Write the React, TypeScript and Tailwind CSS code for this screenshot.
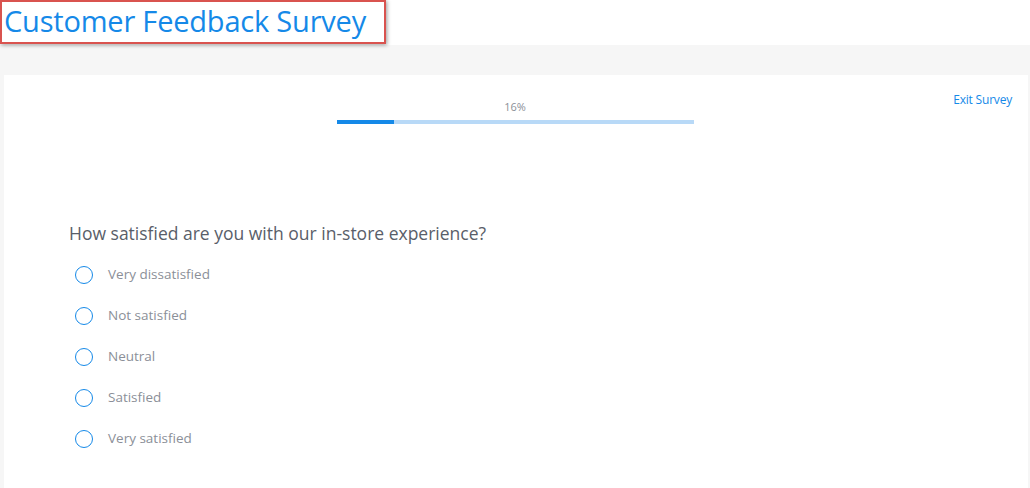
import React from "react";

const OPTIONS = ["Very dissatisfied", "Not satisfied", "Neutral", "Satisfied", "Very satisfied"];

export default function App() {
  const progress = 16;

  return (
    <div className="h-[488px] w-[1030px] overflow-hidden bg-white font-['Open_Sans',sans-serif]">
      {/* Title, highlighted */}
      <header className="h-[45px] bg-white">
        <div className="inline-block h-[44px] w-[386px] border-2 border-[#d9534f] pl-[2px] shadow-[1px_1px_4px_rgba(0,0,0,0.4)]">
          <h1 className="text-[29px] leading-[38px] tracking-[-0.2px] text-[#1589e8]">Customer Feedback Survey</h1>
        </div>
      </header>

      <div className="h-[443px] bg-[#f6f6f6] pt-[30px] pl-[4px] pr-[2px]">
        <div className="h-full bg-white">
          {/* Progress row */}
          <div className="relative flex justify-center pt-[24px]">
            <div className="-ml-[2px] flex w-[357px] flex-col items-center">
              <span className="text-[11px] leading-[16px] text-[#8b8f98]">{progress}%</span>
              <div className="mt-[5px] h-[4px] w-full bg-[#b8d9f7]">
                <div className="h-full bg-[#1589e8]" style={{ width: `${progress}%` }} />
              </div>
            </div>
            <a className="absolute right-[16px] top-[16px] text-[12px] tracking-[-0.2px] text-[#1589e8]">Exit Survey</a>
          </div>

          {/* Question */}
          <div className="pl-[65px] pt-[97px]">
            <p className="text-[17.5px] leading-[24px] text-[#595e69]">How satisfied are you with our in-store experience?</p>
            <div className="mt-[9px] flex flex-col">
              {OPTIONS.map((o) => (
                <label key={o} className="flex h-[41px] items-center">
                  <span className="ml-[6px] h-[18px] w-[18px] rounded-full border-[1.5px] border-[#1589e8]" />
                  <span className="ml-[15px] text-[13.5px] text-[#8b8f98]">{o}</span>
                </label>
              ))}
            </div>
          </div>
        </div>
      </div>
    </div>
  );
}
